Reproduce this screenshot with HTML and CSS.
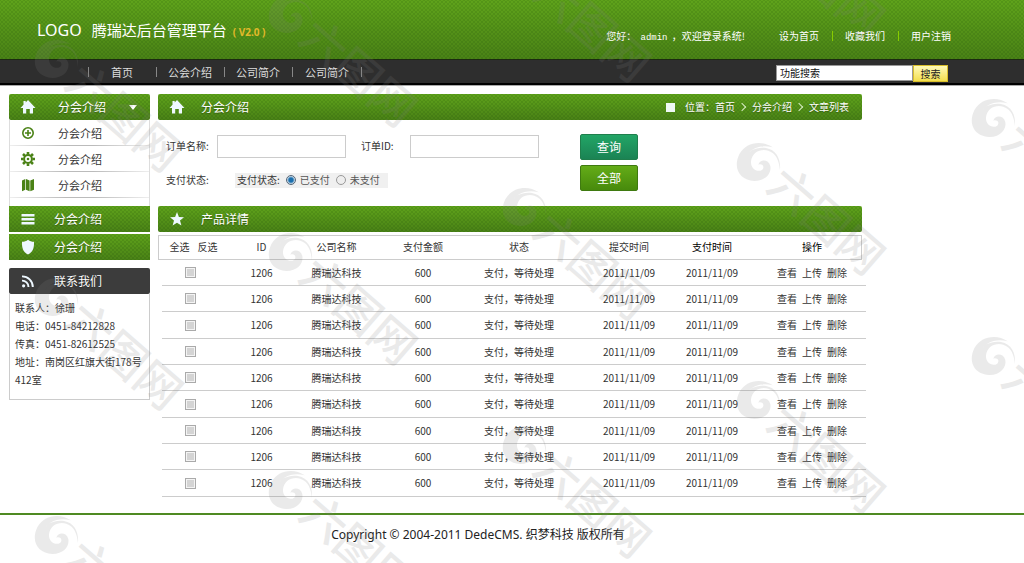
FILE: index.html
```html
<!DOCTYPE html>
<html lang="zh-CN">
<head>
<meta charset="utf-8">
<meta name="viewport" content="width=device-width, initial-scale=1">
<title>腾瑞达后台管理平台</title>
<link rel="stylesheet" href="styles.css">
</head>
<body>
<svg class="sprite" aria-hidden="true">
  <symbol id="home" viewBox="0 0 16 16"><path d="M8 1 15.500 9H13v5.500H9.800V10H6.200v4.500H3V9H.5l3-3.300V2h2.200v1.400z"/></symbol>
  <symbol id="star" viewBox="0 0 16 16"><path d="M8 1l1.9 4.9 5.1.3-4 3.3 1.4 5.1L8 11.8l-4.4 2.8L5 9.500l-4-3.300 5.100-.3z"/></symbol>
  <symbol id="plus" viewBox="0 0 16 16"><circle cx="8" cy="8" r="5.200" fill="none" stroke="currentColor" stroke-width="1.600"/><path d="M7.200 5h1.600v2.200H11v1.600H8.800V11H7.200V8.800H5V7.200h2.200z"/></symbol>
  <symbol id="gear" viewBox="0 0 16 16"><circle cx="8" cy="8" r="3.900" fill="none" stroke="currentColor" stroke-width="2"/><circle cx="8" cy="8" r="1.300"/><path stroke="currentColor" stroke-width="2.600" fill="none" d="M8 1v2.500M8 12.500V15M1 8h2.500M12.500 8H15M3 3l1.900 1.900M11.100 11.100 13 13M13 3l-1.900 1.900M4.900 11.100 3 13"/></symbol>
  <symbol id="map" viewBox="0 0 16 16"><path d="M2 3.500 5.300 2v10.800L2 14.200zM6 2l3.600 1.500v10.700L6 12.800zM10.300 3.500 14 2v10.800l-3.700 1.400z"/></symbol>
  <symbol id="bars" viewBox="0 0 16 16"><path d="M1.500 3h13v2.400h-13zM1.500 7h13v2.400h-13zM1.500 11h13v2.400h-13z"/></symbol>
  <symbol id="shield" viewBox="0 0 16 16"><path d="M8 .8c1.800 1.500 3.600 2 6 2 .2 6-1 10.200-6 12.700C3 13 1.800 8.800 2 2.800c2.400 0 4.200-.5 6-2z"/></symbol>
  <symbol id="rss" viewBox="0 0 16 16"><circle cx="3.600" cy="12.800" r="1.600"/><path fill="none" stroke="currentColor" stroke-width="1.900" d="M2 7.600a6.400 6.400 0 0 1 6.500 6.400M2 3.400A10.600 10.600 0 0 1 12.800 14"/></symbol>
  <symbol id="mark" viewBox="0 0 170 160" overflow="visible">
    <path transform="scale(.333)" d="M128 37C95 14 47 22 28 58 7 102 32 137 73 138c35 0 52-24 48-45-5-20-30-22-36-4 13-4 20 7 12 15-14 10-36-2-34-25 3-28 30-39 52-32 24 8 32 29 35 58 3-34-11-60-42-66-27-4-53 7-62 29 11-26 47-42 82-31z"/>
    <text x="96" y="102" text-anchor="middle" transform="rotate(41 96 86)">六图网</text>
  </symbol>
</svg>

<header class="top">
  <div class="wrap top-in">
    <h1 class="brand"><span class="logo">LOGO</span>腾瑞达后台管理平台<small>( V2.0 )</small></h1>
    <div class="account">
      <span class="hello">您好： <span class="user">admin</span> ，欢迎登录系统!</span>
      <a href="#">设为首页</a><a href="#">收藏我们</a><a href="#">用户注销</a>
    </div>
  </div>
</header>

<div class="navbar">
  <div class="wrap nav-in">
    <nav class="nav"><a href="#">首页</a><a href="#">公会介绍</a><a href="#">公司简介</a><a href="#">公司简介</a></nav>
    <form class="search"><input type="text" value="功能搜索" aria-label="功能搜索"><button type="button">搜索</button></form>
  </div>
</div>

<div class="wrap page">
  <aside class="side">
    <button type="button" class="bar round"><svg><use href="#home"/></svg><span>分会介绍</span><i class="caret"></i></button>
    <ul class="sub">
      <li><a href="#"><svg><use href="#plus"/></svg>分会介绍</a></li>
      <li><a href="#"><svg><use href="#gear"/></svg>分会介绍</a></li>
      <li><a href="#"><svg><use href="#map"/></svg>分会介绍</a></li>
    </ul>
    <button type="button" class="bar near"><svg><use href="#bars"/></svg><span>分会介绍</span></button>
    <button type="button" class="bar near second"><svg><use href="#shield"/></svg><span>分会介绍</span></button>
    <h2 class="bar near dark"><svg><use href="#rss"/></svg><span>联系我们</span></h2>
    <div class="contact">
      <p>联系人：徐珊</p>
      <p>电话：0451-84212828</p>
      <p>传真：0451-82612525</p>
      <p>地址：南岗区红旗大街178号412室</p>
    </div>
  </aside>

  <main class="main">
    <div class="bar round wide">
      <svg><use href="#home"/></svg><h2>分会介绍</h2>
      <nav class="crumbs"><i class="square"></i>位置：<a href="#">首页</a><i class="chev"></i><a href="#">分会介绍</a><i class="chev"></i><a href="#">文章列表</a></nav>
    </div>

    <form class="filter">
      <div class="fields">
        <div class="line">
          <label for="name">订单名称:</label><input id="name" class="box" type="text">
          <label for="oid" class="l2">订单ID:</label><input id="oid" class="box" type="text">
        </div>
        <div class="line">
          <span class="state-label">支付状态:</span>
          <fieldset class="state">
            <span class="cap">支付状态:</span>
            <input type="radio" name="pay" id="paid" checked><label for="paid">已支付</label>
            <input type="radio" name="pay" id="unpaid"><label for="unpaid">未支付</label>
          </fieldset>
        </div>
      </div>
      <div class="actions"><button type="button" class="teal">查询</button><button type="button">全部</button></div>
    </form>

    <div class="bar round wide"><svg><use href="#star"/></svg><h2>产品详情</h2></div>
    <table class="orders">
      <colgroup><col class="c1"><col class="c2"><col class="c3"><col class="c4"><col class="c5"><col class="c6"><col class="c7"><col class="c8"></colgroup>
      <thead><tr><th class="pick"><a href="#">全选</a><a href="#">反选</a></th><th>ID</th><th>公司名称</th><th>支付金额</th><th>状态</th><th class="pad">提交时间</th><th class="strong">支付时间</th><th class="strong">操作</th></tr></thead>
      <tbody>
        <tr><td><input type="checkbox" aria-label="选择"></td><td>1206</td><td>腾瑞达科技</td><td>600</td><td>支付，等待处理</td><td class="pad">2011/11/09</td><td>2011/11/09</td><td class="ops"><a href="#">查看</a><a href="#">上传</a><a href="#">删除</a></td></tr>
        <tr><td><input type="checkbox" aria-label="选择"></td><td>1206</td><td>腾瑞达科技</td><td>600</td><td>支付，等待处理</td><td class="pad">2011/11/09</td><td>2011/11/09</td><td class="ops"><a href="#">查看</a><a href="#">上传</a><a href="#">删除</a></td></tr>
        <tr><td><input type="checkbox" aria-label="选择"></td><td>1206</td><td>腾瑞达科技</td><td>600</td><td>支付，等待处理</td><td class="pad">2011/11/09</td><td>2011/11/09</td><td class="ops"><a href="#">查看</a><a href="#">上传</a><a href="#">删除</a></td></tr>
        <tr><td><input type="checkbox" aria-label="选择"></td><td>1206</td><td>腾瑞达科技</td><td>600</td><td>支付，等待处理</td><td class="pad">2011/11/09</td><td>2011/11/09</td><td class="ops"><a href="#">查看</a><a href="#">上传</a><a href="#">删除</a></td></tr>
        <tr><td><input type="checkbox" aria-label="选择"></td><td>1206</td><td>腾瑞达科技</td><td>600</td><td>支付，等待处理</td><td class="pad">2011/11/09</td><td>2011/11/09</td><td class="ops"><a href="#">查看</a><a href="#">上传</a><a href="#">删除</a></td></tr>
        <tr><td><input type="checkbox" aria-label="选择"></td><td>1206</td><td>腾瑞达科技</td><td>600</td><td>支付，等待处理</td><td class="pad">2011/11/09</td><td>2011/11/09</td><td class="ops"><a href="#">查看</a><a href="#">上传</a><a href="#">删除</a></td></tr>
        <tr><td><input type="checkbox" aria-label="选择"></td><td>1206</td><td>腾瑞达科技</td><td>600</td><td>支付，等待处理</td><td class="pad">2011/11/09</td><td>2011/11/09</td><td class="ops"><a href="#">查看</a><a href="#">上传</a><a href="#">删除</a></td></tr>
        <tr><td><input type="checkbox" aria-label="选择"></td><td>1206</td><td>腾瑞达科技</td><td>600</td><td>支付，等待处理</td><td class="pad">2011/11/09</td><td>2011/11/09</td><td class="ops"><a href="#">查看</a><a href="#">上传</a><a href="#">删除</a></td></tr>
        <tr><td><input type="checkbox" aria-label="选择"></td><td>1206</td><td>腾瑞达科技</td><td>600</td><td>支付，等待处理</td><td class="pad">2011/11/09</td><td>2011/11/09</td><td class="ops"><a href="#">查看</a><a href="#">上传</a><a href="#">删除</a></td></tr>
      </tbody>
    </table>
  </main>
</div>

<footer class="foot"><p class="wrap">Copyright © 2004-2011 DedeCMS. 织梦科技 版权所有</p></footer>

<svg class="watermark" aria-hidden="true">
  <use href="#mark" x="28" y="32" width="170" height="160"/>
  <use href="#mark" x="28" y="270" width="170" height="160"/>
  <use href="#mark" x="28" y="508" width="170" height="160"/>
  <use href="#mark" x="262" y="-13" width="170" height="160"/>
  <use href="#mark" x="262" y="225" width="170" height="160"/>
  <use href="#mark" x="262" y="463" width="170" height="160"/>
  <use href="#mark" x="496" y="-58" width="170" height="160"/>
  <use href="#mark" x="496" y="180" width="170" height="160"/>
  <use href="#mark" x="496" y="418" width="170" height="160"/>
  <use href="#mark" x="730" y="-103" width="170" height="160"/>
  <use href="#mark" x="730" y="135" width="170" height="160"/>
  <use href="#mark" x="730" y="373" width="170" height="160"/>
  <use href="#mark" x="965" y="91" width="170" height="160"/>
  <use href="#mark" x="965" y="329" width="170" height="160"/>
</svg>
</body>
</html>
```

FILE: styles.css
```css
* { box-sizing: border-box; }
body {
  margin: 0;
  position: relative;
  min-height: 100vh;
  overflow-x: hidden;
  background: #fff;
  color: #333;
  font: 10px/18px "Noto Sans CJK SC", sans-serif;
}
a { color: inherit; text-decoration: none; }
h1, h2, p, ul { margin: 0; padding: 0; font-weight: 400; list-style: none; }
button, input { font: inherit; margin: 0; }
button { cursor: pointer; }
.sprite { position: absolute; width: 0; height: 0; }
.wrap { max-width: 956px; }

.top {
  background:
    radial-gradient(circle, rgba(0, 40, 0, .1) 1px, transparent 1px) 0 0 / 4px 4px,
    radial-gradient(circle, rgba(0, 40, 0, .1) 1px, transparent 1px) 2px 2px / 4px 4px,
    linear-gradient(#5fa31b, #4a8216);
  color: #fff;
}
.top-in { display: flex; justify-content: space-between; height: 59px; padding: 0 5px 0 37px; }
.brand { font-size: 15px; line-height: 59px; white-space: nowrap; }
.logo { font: 16px "Noto Sans", sans-serif; margin-right: 10px; }
.brand small { font: bold 10px "Noto Sans", sans-serif; color: #e3b92b; margin-left: 6px; }
.account { display: flex; align-items: center; padding-top: 12px; white-space: nowrap; }
.hello { margin-right: 34px; }
.user { margin: 0 2px; font: 9px "Liberation Mono", monospace; }
.account a + a { margin-left: 13px; padding-left: 13px; background: linear-gradient(#8c0, #8c0) left center / 1px 10px no-repeat; }

.navbar { background: #2e2e2e; border-top: 1px solid #1c2a10; border-bottom: 2px solid #000; box-shadow: 0 1px #aaa; color: #ddd; }
.nav-in { display: flex; justify-content: space-between; align-items: center; height: 23px; padding: 0 8px 0 88px; }
.nav { display: flex; font-size: 11px; }
.nav a { width: 68px; text-align: center; background: linear-gradient(#888, #888) left center / 1px 10px no-repeat; }
.nav a:last-child { width: 70px; background: linear-gradient(#888, #888) left center / 1px 10px no-repeat, linear-gradient(#888, #888) right center / 1px 10px no-repeat; }
.search { display: flex; margin-top: 4px; }
.search input { width: 137px; height: 16px; padding: 0 3px; border: 1px solid #999; color: #111; background: #fff; }
.search button { width: 35px; height: 17px; padding: 0; line-height: 15px; border: 1px solid #d9be2a; background: linear-gradient(#fffab8, #f3df4e); color: #222; }

.page { display: flex; gap: 8px; padding: 9px 0 16px 9px; align-items: flex-start; }
.side { flex: 0 0 141px; }
.main { flex: 0 1 708px; min-width: 0; }

.bar {
  display: flex;
  align-items: center;
  width: 100%;
  height: 26px;
  padding: 0 13px 0 11px;
  border: 0;
  color: #fff;
  font-size: 12px;
  text-align: left;
  text-shadow: 0 1px 1px rgba(0, 0, 0, .3);
  background:
    radial-gradient(circle, rgba(0, 40, 0, .1) 1px, transparent 1px) 0 0 / 4px 4px,
    radial-gradient(circle, rgba(0, 40, 0, .1) 1px, transparent 1px) 2px 2px / 4px 4px,
    linear-gradient(#5fa31b, #4a8216);
}
.bar svg { flex: none; width: 16px; height: 16px; fill: currentColor; color: #eef8ff; margin-right: 22px; }
.bar.near svg { margin-right: 18px; }
.bar.wide svg { margin-right: 16px; }
.bar h2 { font-size: 12px; }
.round { border-radius: 2px; }
.second { margin-top: 2px; }
.caret { margin-left: auto; border: 4px solid transparent; border-top: 5px solid #fff; border-bottom: 0; }
.bar.dark { margin-top: 8px; border-radius: 2px; background: #3c3c3c; }
.sub { padding-bottom: 8px; border: solid #ddd; border-width: 0 1px; }
.sub a { display: flex; align-items: center; height: 26px; padding: 0 0 1px 10px; font-size: 11px; background: linear-gradient(90deg, #eee, #bbb 40%, #bbb 60%, #eee) bottom / 100% 1px no-repeat; }
.sub svg { width: 16px; height: 16px; margin-right: 22px; fill: currentColor; color: #4a8216; }
.contact { padding: 5px 4px 10px 5px; border: 1px solid #ccc; border-top: 0; }

.wide { width: calc(100% - 4px); }
.crumbs { display: flex; align-items: center; margin-left: auto; font-size: 10px; }
.square { width: 9px; height: 9px; margin-right: 10px; background: #eef8f4; }
.chev { width: 6px; height: 6px; margin: 0 7px 0 4px; border: solid #d8ecc4; border-width: 1px 1px 0 0; transform: rotate(45deg); }

.filter { display: flex; padding: 14px 0 14px 8px; }
.fields { flex: 0 0 414px; }
.line { display: flex; align-items: center; height: 24px; }
.line + .line { margin-top: 10px; }
.line > label { width: 51px; }
.line > .l2 { width: 49px; margin-left: 15px; }
.box { width: 129px; height: 23px; border: 1px solid #ccc; background: #fff; }
.state-label { width: 69px; }
.state { display: flex; align-items: center; height: 15px; margin: 0; padding: 0 8px 0 2px; border: 0; background: #f0f0f0; color: #555; }
.cap { color: #333; margin-right: 6px; }
.state input { appearance: none; width: 10px; height: 10px; border: 1px solid #999; border-radius: 50%; background: #eee; }
.state input:checked { border-color: #567; background: radial-gradient(circle, #1a6fae 2px, #dde6ee 4px); }
.state label { margin: 0 6px 0 4px; }
.state label:last-child { margin-right: 0; }
.actions { display: flex; flex-direction: column; gap: 5px; }
.actions button { width: 58px; height: 26px; padding: 0; border: 1px solid #3f7a10; border-radius: 2px; color: #fff; font-size: 12px; line-height: 22px; background: linear-gradient(#64ac18, #478a0c); }
.actions .teal { border-color: #1f7f4c; background: linear-gradient(#22a566, #1b8354); }

.orders { width: 100%; margin-top: 3px; border-collapse: collapse; table-layout: fixed; text-align: center; }
.c1 { width: 64px; } .c2 { width: 79px; } .c3 { width: 71px; } .c4 { width: 102px; }
.c5 { width: 90px; } .c6 { width: 102px; } .c7 { width: 92px; } .c8 { width: 108px; }
.orders th, .orders td { padding: 0 0 1px; line-height: 18px; font-weight: 400; white-space: nowrap; }
.orders thead tr {
  height: 25px;
  background:
    linear-gradient(#fff, #fff) 1px 1px / calc(100% - 6px) calc(100% - 2px) no-repeat,
    linear-gradient(#ccc, #ccc) 0 0 / calc(100% - 4px) 100% no-repeat;
}
.orders tbody tr { height: 26px; background: linear-gradient(90deg, transparent 4px, #ccc 4px) bottom / 100% 1px no-repeat; }
.orders tbody tr:nth-child(3n) { height: 27px; }
.orders .pad { padding-left: 28px; }
.orders .strong { color: #000; }
.orders .pick { padding-left: 7px; }
.pick a + a { margin-left: 8px; }
.ops a + a { margin-left: 5px; }
.orders input { appearance: none; display: block; width: 11px; height: 11px; margin: 0 auto; border: 1px solid #aaa; background: #d4d4d4; box-shadow: inset 0 0 0 1px #f4f4f4; }

.foot { border-top: 2px solid #4f8a22; color: #222; font: 12px/20px "Noto Sans", "Noto Sans CJK SC", sans-serif; text-align: center; }
.foot p { padding: 10px 0 18px; }

.watermark { position: absolute; inset: 0; width: 100%; height: 100%; overflow: hidden; pointer-events: none; fill: #808080; opacity: .16; font: 500 45px "Noto Sans CJK SC", sans-serif; }
```
